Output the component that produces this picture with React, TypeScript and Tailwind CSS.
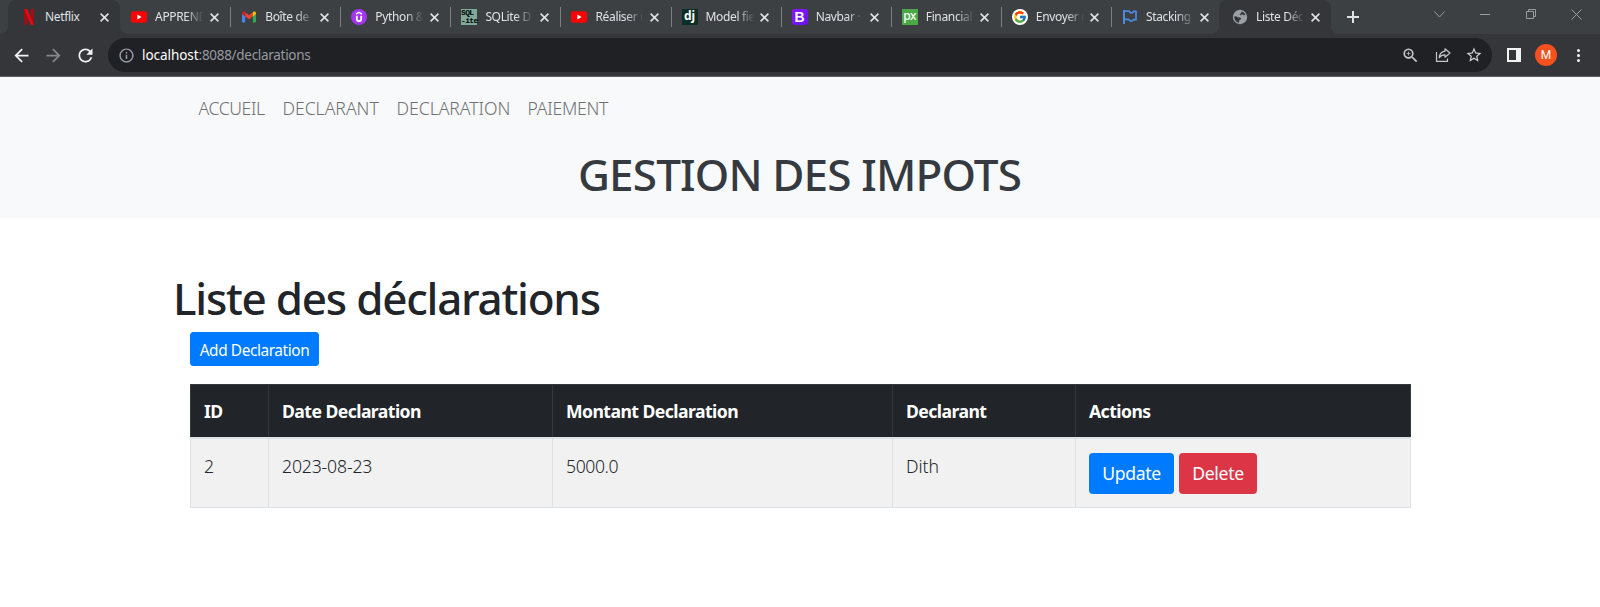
import type { ReactNode } from "react";
import { FcGoogle } from "react-icons/fc";
import {
  MdArrowBack,
  MdArrowForward,
  MdInfoOutline,
  MdRefresh,
  MdStarBorder,
  MdZoomIn,
} from "react-icons/md";

const NetflixIcon = () => (
  <svg width="16" height="16" viewBox="0 0 16 16">
    <path d="M3.3 0h3v15.6l-3 .4z" fill="#b1060f" />
    <path d="M9.8 0h2.9v16l-2.9-.4z" fill="#b1060f" />
    <path d="M3.3 0h3l6.4 16-3.1-.4z" fill="#e50914" />
  </svg>
);

const YoutubeIcon = () => (
  <svg width="16" height="16" viewBox="0 0 16 16">
    <rect x="0" y="2.3" width="16" height="11.4" rx="2.8" fill="#f00" />
    <path d="M6.4 5.6 10.6 8l-4.2 2.4z" fill="#fff" />
  </svg>
);

const GmailIcon = () => (
  <svg width="16" height="16" viewBox="0 0 16 16">
    <path d="M1 4.6 4.2 7v6.6H2.1A1.1 1.1 0 0 1 1 12.5z" fill="#4285f4" />
    <path d="M15 4.6 11.8 7v6.6h2.1a1.1 1.1 0 0 0 1.1-1.1z" fill="#34a853" />
    <path d="M4.2 3.3 8 6.2l3.8-2.9v4.1L8 10.3 4.2 7.4z" fill="#ea4335" />
    <path d="M1 4.4c0-1.7 1.7-2.3 2.8-1.5l.4.4v4.1L1 5z" fill="#c5221f" />
    <path d="M15 4.4c0-1.7-1.7-2.3-2.8-1.5l-.4.4v4.1L15 5z" fill="#fbbc04" />
  </svg>
);

const UdemyIcon = () => (
  <svg width="16" height="16" viewBox="0 0 16 16">
    <circle cx="8" cy="8" r="8" fill="#a435f0" />
    <path d="M5 5.2 8 3.4l3 1.8" fill="none" stroke="#fff" strokeWidth="1.5" />
    <path d="M5.8 6.8V10a2.2 2.2 0 0 0 4.4 0V6.8" fill="none" stroke="#fff" strokeWidth="1.8" />
  </svg>
);

const SqliteIcon = () => (
  <span className="flex h-4 w-4 items-center justify-center bg-[#7fa99b] font-['Liberation_Mono',monospace] text-[8px] leading-[8px] font-bold tracking-[-0.6px] whitespace-pre text-black">
    {"SQL\n-ite"}
  </span>
);

const DjangoIcon = () => (
  <span className="flex h-4 w-4 justify-center bg-[#0c2e26] font-['Noto_Sans',sans-serif] text-[12px] leading-[14px] font-bold text-white">
    dj
  </span>
);

const BootstrapIcon = () => (
  <span className="flex h-4 w-4 justify-center rounded-[3px] bg-linear-to-br from-[#9013fe] to-[#6610f2] font-['Liberation_Sans',sans-serif] text-[14px] leading-4 font-bold text-white">
    B
  </span>
);

const PxIcon = () => (
  <span className="flex h-4 w-4 justify-center bg-[#4ba847] font-['Noto_Sans',sans-serif] text-[12px] leading-[14px] font-medium tracking-[-0.3px] text-white">
    px
  </span>
);

const GoogleIcon = () => (
  <span className="flex h-4 w-4 items-center justify-center rounded-full bg-white">
    <FcGoogle size={14} />
  </span>
);

const FlagIcon = () => (
  <svg width="16" height="16" viewBox="0 0 16 16" fill="none" stroke="#4a8ae0">
    <path d="M2 1v14" strokeWidth="2" />
    <path d="M2 2.2h5l1.6 1.6 2-.2 1-1.2H14v8.2h-2.6l-1 1.2H8.2l-1.6-1.4H2" strokeWidth="1.7" />
  </svg>
);

const GlobeIcon = () => (
  <svg width="16" height="16" viewBox="0 0 16 16">
    <circle cx="8" cy="8" r="7.2" fill="#9aa0a6" />
    <path d="M9.6 2.6c1.6.4 3 1.500 3.700 3-.7.9-2.200.8-2.900 0-.8-.2-1.600.4-2.300.8-.6-.4-.3-1.500.5-1.800.9-.3.500-1.300 1-2z" fill="#35363a" />
    <path d="M2.300 7.300c1.300-.3 2.500.1 3.400.9 1.200.2 2.600 0 3.300 1 .3 1-.8 1.500-1.600 1.700-.4.900.1 1.900-.6 2.800C4.100 13.200 2 10.500 2.300 7.300z" fill="#35363a" />
  </svg>
);

type Tab = { title: string; icon: ReactNode; state?: "lit" | "plain" };

const tabs: Tab[] = [
  { title: "Netflix", icon: <NetflixIcon />, state: "lit" },
  { title: "APPREND", icon: <YoutubeIcon />, state: "plain" },
  { title: "Boîte de", icon: <GmailIcon /> },
  { title: "Python &", icon: <UdemyIcon /> },
  { title: "SQLite D", icon: <SqliteIcon /> },
  { title: "Réaliser u", icon: <YoutubeIcon /> },
  { title: "Model fie", icon: <DjangoIcon /> },
  { title: "Navbar ·", icon: <BootstrapIcon /> },
  { title: "Financial", icon: <PxIcon /> },
  { title: "Envoyer d", icon: <GoogleIcon /> },
  { title: "Stacking", icon: <FlagIcon /> },
  { title: "Liste Déc", icon: <GlobeIcon />, state: "lit" },
];

function LitBackdrop() {
  return (
    <svg className="absolute top-0 -left-[10px] h-[34px] w-[128px]" viewBox="0 0 128 34">
      <path d="M0 34a8 8 0 0 0 8-8V8a8 8 0 0 1 8-8h96a8 8 0 0 1 8 8v18a8 8 0 0 0 8 8z" fill="#35363a" />
    </svg>
  );
}

function BrowserTab({ title, icon, state }: Tab) {
  return (
    <div className="relative flex h-[34px] w-[110.1px] shrink-0 items-center pl-[11px]">
      {state === "lit" && <LitBackdrop />}
      {!state && <span className="absolute top-[7px] left-0 h-5 w-px bg-[#7b7e82]" />}
      <span className="relative flex h-4 w-4 shrink-0 items-center">{icon}</span>
      <span
        className={`relative ml-[8px] w-[51px] overflow-hidden font-['Noto_Sans',sans-serif] text-[12px] leading-[18px] tracking-[-0.35px] whitespace-nowrap text-[#dfe1e5] ${
          title === "Netflix" ? "" : "mask-r-from-60% mask-r-to-95%"
        }`}
      >
        {title}
      </span>
      <svg className="relative ml-[3.5px] shrink-0" width="9" height="9" viewBox="0 0 9 9" stroke="#dfe1e5" strokeWidth="1.6">
        <path d="m.6.6 7.8 7.8M8.4.6.6 8.4" />
      </svg>
    </div>
  );
}

function TabStrip() {
  return (
    <div className="flex h-[34px] items-center overflow-hidden bg-[#3c4043] pl-[10px]">
      {tabs.map((tab) => (
        <BrowserTab key={tab.title} {...tab} />
      ))}
      <svg className="ml-[16px] shrink-0" width="12" height="12" viewBox="0 0 12 12" stroke="#dfe1e5" strokeWidth="2">
        <path d="M6 0v12M0 6h12" />
      </svg>
      <div className="mr-[18px] mb-[6px] ml-auto flex items-center gap-[35.5px] text-[#9a9c9f]">
        <svg width="11" height="7" viewBox="0 0 11 7" fill="none" stroke="currentColor">
          <path d="m.5.5 5 5.5 5-5.5" />
        </svg>
        <svg width="10" height="11" viewBox="0 0 10 11" stroke="currentColor">
          <path d="M0 5.5h10" />
        </svg>
        <svg width="10" height="10" viewBox="0 0 10 10" fill="none" stroke="currentColor">
          <path d="M.5 2.5h7v7h-7zM2.5 2.5v-2h7v7h-2" />
        </svg>
        <svg width="11" height="11" viewBox="0 0 11 11" stroke="currentColor">
          <path d="m.5.5 10 10M10.5.5l-10 10" />
        </svg>
      </div>
    </div>
  );
}

function Toolbar() {
  return (
    <div className="flex h-[43px] items-center border-b border-[#5f6063] bg-[#35363a] pl-[11px]">
      <MdArrowBack size={21} className="shrink-0 text-[#f1f3f4]" />
      <MdArrowForward size={21} className="ml-[11px] shrink-0 text-[#85878a]" />
      <MdRefresh size={21} className="ml-[11px] shrink-0 text-[#f1f3f4]" />
      <div className="ml-[12px] flex h-[34px] w-[1384px] items-center rounded-full bg-[#202124] pr-[9px] pl-[9.5px]">
        <MdInfoOutline size={17} className="text-[#9aa0a6]" />
        <span className="ml-[7.5px] flex font-['Noto_Sans',sans-serif] text-[13.5px] leading-5 text-[#969ba1]">
          <span className="tracking-[-0.05px] text-white">localhost</span>
          <span className="tracking-[-0.3px]">:8088/declarations</span>
        </span>
        <MdZoomIn size={19} className="ml-auto text-[#c4c7c9]" />
        <svg className="ml-[15px]" width="16" height="16" viewBox="0 0 16 16" fill="none" stroke="#c4c7c9" strokeWidth="1.2">
          <path d="M1.5 5v9.4h11v-3" />
          <path d="M10 1.8 15 6l-5 4.2V7.8C7.4 7.7 5.6 8.6 4.2 10.8 4.5 7.2 6.4 4.7 10 4.2z" strokeLinejoin="round" />
        </svg>
        <MdStarBorder size={18} className="ml-[14px] text-[#d0d3d5]" />
      </div>
      <svg className="ml-[15px] shrink-0" width="14" height="14" viewBox="0 0 14 14">
        <path d="M0 0h14v14H0zM2 2v10h7V2z" fill="#f1f3f4" fillRule="evenodd" />
      </svg>
      <span className="ml-[14px] flex h-[22px] w-[22px] shrink-0 items-center justify-center rounded-full bg-[#f4511e] font-['Roboto',sans-serif] text-[12px] leading-none font-normal text-white">
        M
      </span>
      <svg className="ml-[20px] shrink-0" width="3" height="13" viewBox="0 0 3 13" fill="#f1f3f4">
        <circle cx="1.5" cy="1.5" r="1.5" />
        <circle cx="1.5" cy="6.5" r="1.5" />
        <circle cx="1.5" cy="11.5" r="1.5" />
      </svg>
    </div>
  );
}

function SiteHeader() {
  return (
    <header className="h-[141px] bg-[#f8f9fa]">
      <nav className="flex h-[62px] items-center pl-[198.6px] text-[#6f7071]">
        <a className="w-[83.8px] tracking-[-0.4px]">ACCUEIL</a>
        <a className="w-[114.2px]">DECLARANT</a>
        <a className="w-[131px] tracking-[-0.05px]">DECLARATION</a>
        <a className="tracking-[-0.25px]">PAIEMENT</a>
      </nav>
      <h1 className="pt-px pr-px text-center text-[44px] leading-[69px] font-medium tracking-[-0.85px] text-[#343a40]">
        GESTION DES IMPOTS
      </h1>
    </header>
  );
}

const headCell = "border border-[#32383e] border-b-0 px-[13px] text-left align-middle tracking-[-0.55px]";
const bodyCell = "border border-[#dee2e6] px-[13px] pt-[14px] align-top";

function DeclarationTable() {
  return (
    <table className="mt-[18px] w-[1221px] table-fixed border-collapse">
      <colgroup>
        <col className="w-[78px]" />
        <col className="w-[284px]" />
        <col className="w-[340px]" />
        <col className="w-[183px]" />
        <col className="w-[335px]" />
      </colgroup>
      <thead className="bg-[#212529] font-bold text-white">
        <tr className="h-[53px]">
          <th className={headCell}>ID</th>
          <th className={headCell}>Date Declaration</th>
          <th className={headCell}>Montant Declaration</th>
          <th className={headCell}>Declarant</th>
          <th className={headCell}>Actions</th>
        </tr>
      </thead>
      <tbody className="bg-[#f1f1f2]">
        <tr className="h-[70px] border-t-2 border-[#dee2e6]">
          <td className={bodyCell}>2</td>
          <td className={bodyCell}>
            <span className="tracking-[-0.15px]">2023-08-23</span>
          </td>
          <td className={bodyCell}>
            <span className="tracking-[-0.4px]">5000.0</span>
          </td>
          <td className={bodyCell}>Dith</td>
          <td className={bodyCell}>
            <div className="flex gap-[5px] font-normal tracking-[-0.35px] text-white">
              <button className="h-[41px] w-[85px] rounded-[4px] bg-[#007bff]">Update</button>
              <button className="h-[41px] w-[78px] rounded-[4px] bg-[#dc3545]">Delete</button>
            </div>
          </td>
        </tr>
      </tbody>
    </table>
  );
}

export default function App() {
  return (
    <div className="h-[607px] overflow-hidden bg-white">
      <TabStrip />
      <Toolbar />
      <div className="font-['Noto_Sans',sans-serif] text-[17.6px] leading-[26px] font-light text-[#212529]">
        <SiteHeader />
        <main className="pt-[54px] pl-[190px]">
          <h1 className="-ml-[17px] text-[44px] leading-[52px] font-medium tracking-[-1.25px]">
            Liste des déclarations
          </h1>
          <button className="mt-[8px] block h-[34px] w-[129px] rounded-[3.5px] bg-[#007bff] pt-[4px] text-[15.4px] leading-6 font-normal tracking-[-0.4px] text-white">
            Add Declaration
          </button>
          <DeclarationTable />
        </main>
      </div>
    </div>
  );
}
